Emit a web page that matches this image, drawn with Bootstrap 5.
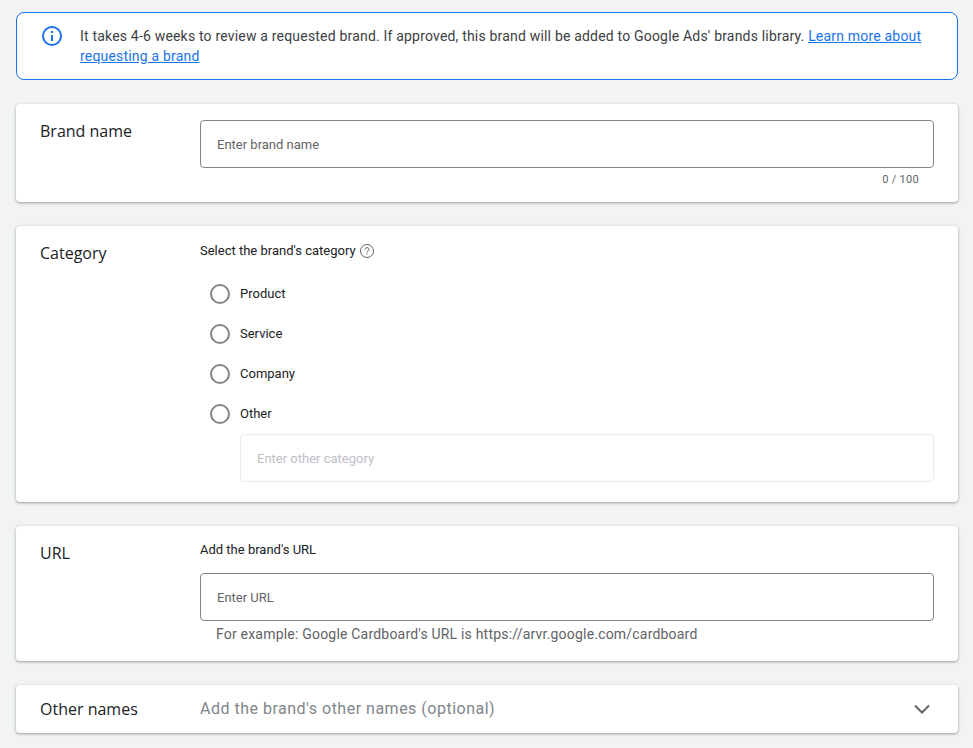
<!DOCTYPE html>
<html lang="en">
<head>
    <meta charset="UTF-8">
    <meta name="viewport" content="width=device-width, initial-scale=1.0">
    <title>Request a brand</title>
    <link href="https://cdn.jsdelivr.net/npm/bootstrap@5.3.0/dist/css/bootstrap.min.css" rel="stylesheet">
    <style>
        body {
            background: #f1f3f4;
            font-family: Roboto, "Liberation Sans", sans-serif;
            color: #202124;
            height: 748px;
            overflow: hidden;
        }
        .page-wrap {
            padding: 12px 15px 0 16px;
        }
        .info-box {
            background: #fff;
            border: 1px solid #1a73e8;
            border-radius: 8px;
            padding: 13px 24px 13px 23px;
            margin-bottom: 24px;
            font-size: 14px;
            line-height: 20px;
            letter-spacing: .19px;
            color: #3c4043;
            gap: 16px;
        }
        .info-box a {
            color: #1a73e8;
        }
        .info-icon {
            flex: 0 0 24px;
            margin-top: -2px;
        }
        .panel {
            background: #fff;
            border-radius: 4px;
            box-shadow: 0 1px 2px rgba(60, 64, 67, .3), 0 1px 3px 1px rgba(60, 64, 67, .15);
            margin-bottom: 24px;
            padding: 0 24px;
        }
        .panel-title {
            flex: 0 0 160px;
            font-family: "Open Sans", Roboto, sans-serif;
            font-size: 16px;
            line-height: 24px;
            color: #202124;
        }
        .panel-body {
            flex: 1 1 auto;
            min-width: 0;
        }
        .brand-panel { height: 98px; padding-top: 15px; }
        .brand-panel .panel-body { padding-top: 1px; }
        .category-panel { height: 276px; padding-top: 15px; }
        .url-panel { height: 135px; padding-top: 14px; }
        .url-panel .panel-title { padding-top: 1px; }
        .names-panel { height: 48px; }
        .field-input.form-control {
            height: 48px;
            border: 1px solid #80868b;
            border-radius: 4px;
            padding: 0 16px;
            font-size: 13px;
            color: #202124;
            box-shadow: none;
        }
        .field-input.form-control::placeholder {
            color: #5f6368;
        }
        .field-input.form-control:disabled {
            background: #fff;
            border-color: #e8eaed;
        }
        .field-input.form-control:disabled::placeholder {
            color: #bdc1c6;
        }
        .char-count {
            font-size: 11px;
            line-height: 16px;
            letter-spacing: .3px;
            color: #5f6368;
            padding: 4px 15px 0 0;
            text-align: right;
        }
        .help-line {
            font-size: 13px;
            line-height: 20px;
            color: #202124;
            gap: 3px;
        }
        .url-help {
            margin-bottom: 13px;
        }
        .radio-line {
            height: 40px;
            gap: 10px;
            padding-left: 10px;
            font-size: 13px;
            margin: 0;
        }
        .radio-line .form-check-input {
            flex: 0 0 20px;
            width: 20px;
            height: 20px;
            margin: 0;
            border: 2px solid #80868b;
            background: #fff;
        }
        .radio-list { margin-top: 13px; }
        .other-input { margin-left: 40px; }
        .example-line {
            font-size: 14px;
            line-height: 20px;
            letter-spacing: .2px;
            color: #5f6368;
            padding: 3px 0 0 16px;
        }
        .names-hint {
            font-size: 16px;
            letter-spacing: .5px;
            color: #80868b;
        }
    </style>
</head>
<body>
    <div class="page-wrap">
        <div class="info-box d-flex align-items-start">
            <svg class="info-icon" width="24" height="24" viewBox="0 0 24 24" fill="none">
                <circle cx="12" cy="12" r="9" stroke="#1a73e8" stroke-width="2"/>
                <rect x="11" y="11" width="2" height="6" fill="#1a73e8"/>
                <rect x="11" y="7" width="2" height="2" fill="#1a73e8"/>
            </svg>
            <div>It takes 4-6 weeks to review a requested brand. If approved, this brand will be added to Google Ads' brands library. <a href="#">Learn more about requesting a brand</a></div>
        </div>

        <div class="panel brand-panel d-flex">
            <div class="panel-title">Brand name</div>
            <div class="panel-body">
                <input type="text" class="form-control field-input" placeholder="Enter brand name">
                <div class="char-count">0 / 100</div>
            </div>
        </div>

        <div class="panel category-panel d-flex">
            <div class="panel-title">Category</div>
            <div class="panel-body">
                <div class="help-line d-flex align-items-center">
                    <span>Select the brand's category</span>
                    <svg width="16" height="16" viewBox="0 0 16 16" fill="none">
                        <circle cx="8" cy="8" r="6.5" stroke="#5f6368" stroke-width="1"/>
                        <path d="M6.1 6.5a1.9 1.9 0 1 1 2.9 1.6c-.6.4-1 .7-1 1.5" stroke="#5f6368" stroke-width="1"/>
                        <rect x="7.5" y="10.4" width="1" height="1" fill="#5f6368"/>
                    </svg>
                </div>
                <div class="radio-list">
                    <label class="radio-line d-flex align-items-center"><input class="form-check-input" type="radio" name="category"> Product</label>
                    <label class="radio-line d-flex align-items-center"><input class="form-check-input" type="radio" name="category"> Service</label>
                    <label class="radio-line d-flex align-items-center"><input class="form-check-input" type="radio" name="category"> Company</label>
                    <label class="radio-line d-flex align-items-center"><input class="form-check-input" type="radio" name="category"> Other</label>
                </div>
                <div class="other-input">
                    <input type="text" class="form-control field-input" placeholder="Enter other category" disabled>
                </div>
            </div>
        </div>

        <div class="panel url-panel d-flex">
            <div class="panel-title">URL</div>
            <div class="panel-body">
                <div class="help-line url-help">Add the brand's URL</div>
                <input type="text" class="form-control field-input" placeholder="Enter URL">
                <div class="example-line">For example: Google Cardboard's URL is https://arvr.google.com/cardboard</div>
            </div>
        </div>

        <div class="panel names-panel d-flex align-items-center">
            <div class="panel-title">Other names</div>
            <div class="panel-body names-hint">Add the brand's other names (optional)</div>
            <svg width="24" height="24" viewBox="0 0 24 24" fill="none">
                <path d="M5 8.5l7 7 7-7" stroke="#5f6368" stroke-width="2"/>
            </svg>
        </div>
    </div>
    <script src="https://cdn.jsdelivr.net/npm/bootstrap@5.3.0/dist/js/bootstrap.bundle.min.js"></script>
</body>
</html>
